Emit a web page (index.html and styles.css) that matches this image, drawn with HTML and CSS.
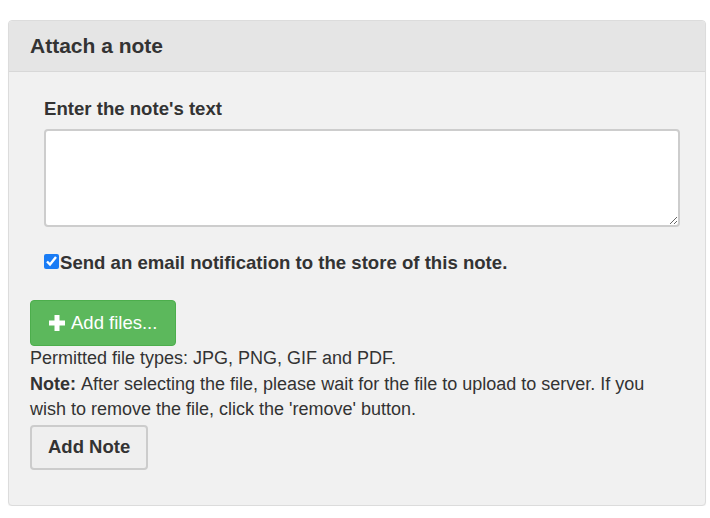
FILE: index.html
```html
<!DOCTYPE html>
<html lang="en">
<head>
    <meta charset="UTF-8">
    <meta name="viewport" content="width=device-width, initial-scale=1.0">
    <title>Attach a note</title>
    <link rel="stylesheet" href="styles.css">
</head>
<body>

    <div class="panel">
        <div class="panel-heading">Attach a note</div>
        <form class="panel-body" id="note-form">
            <div class="form-group">
                <label for="note-text">Enter the note's text</label>
                <textarea id="note-text"></textarea>
                <label class="check-label">
                    <input type="checkbox" id="notify" checked>Send an email notification to the store of this note.
                </label>
            </div>

            <button type="button" class="btn btn-success">
                <svg class="plus" width="18" height="18" viewBox="0 0 18 18">
                    <rect x="6.5" y="1" width="5" height="16" fill="#fff"/>
                    <rect x="1" y="6.5" width="16" height="5" fill="#fff"/>
                </svg>Add files...
            </button>
            <p class="help">Permitted file types: JPG, PNG, GIF and PDF.</p>
            <p class="help"><b>Note: </b>After selecting the file, please wait for the file to upload to server. If you wish to remove the file, click the 'remove' button.</p>

            <button type="submit" class="btn btn-default">Add Note</button>
        </form>
    </div>

</body>
</html>
```

FILE: styles.css
```css
body {
    font-family: 'Liberation Sans', Arial, sans-serif;
    font-size: 18px;
    line-height: 25.6px;
    color: #333;
    background-color: #fff;
    margin: 0;
    padding: 20px 4px 0 8px;
}
.panel {
    border: 1px solid #dcdcdc;
    border-radius: 4px;
    background-color: #f1f1f1;
    box-shadow: 0 1px 1px rgba(0, 0, 0, 0.05);
}
.panel-heading {
    background-color: #e5e5e5;
    border-bottom: 1px solid #d8d8d8;
    border-radius: 4px 4px 0 0;
    padding: 11px 21px 11px;
    font-size: 21px;
    font-weight: bold;
    line-height: 28px;
}
.panel-body {
    padding: 24px 21px 35px;
}
.form-group {
    padding: 0 4px 0 14px;
    margin-bottom: 25px;
}
.form-group > label {
    display: block;
    font-size: 18.6px;
    font-weight: bold;
    margin-bottom: 7px;
}
textarea {
    display: block;
    width: 100%;
    height: 98px;
    box-sizing: border-box;
    border: 2px solid #cdcdcd;
    border-radius: 4px;
    background-color: #fff;
    font-family: inherit;
    font-size: 16px;
    padding: 6px 10px;
    margin-bottom: 23px;
}
.check-label {
    display: flex;
    align-items: center;
    font-size: 18.6px;
    font-weight: bold;
}
.check-label input {
    width: 15px;
    height: 15px;
    margin: 0 1px 0 0;
    accent-color: #1a7cf5;
}
.btn {
    display: inline-flex;
    align-items: center;
    font-family: inherit;
    font-size: 18.5px;
    line-height: 24px;
    border-radius: 4px;
    cursor: pointer;
}
.btn-success {
    background-color: #5cb85c;
    border: 1px solid #4cae4c;
    color: #fff;
    height: 46px;
    padding: 0 18px 0 17px;
}
.plus {
    margin-right: 5px;
}
.btn-default {
    background-color: #efefef;
    border: 2px solid #cccccc;
    color: #333;
    font-weight: bold;
    height: 45px;
    padding: 0 16px;
    margin-top: 2px;
}
.help {
    margin: 0;
}
```
